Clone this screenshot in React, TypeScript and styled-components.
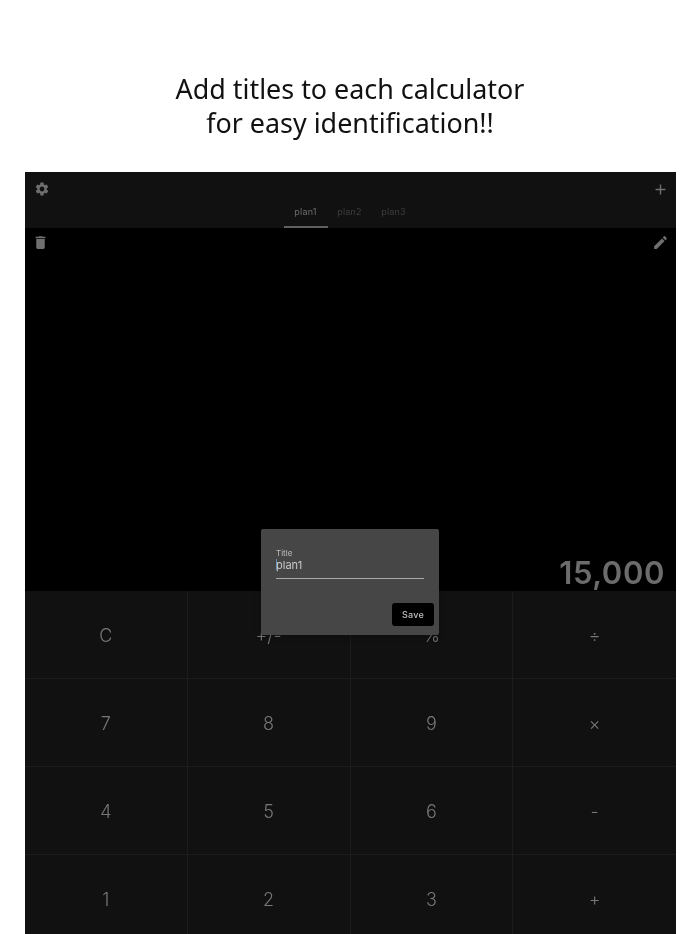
import styled, { createGlobalStyle } from "styled-components";
import { MdAdd, MdDelete, MdEdit, MdSettings } from "react-icons/md";

const plans = ["plan1", "plan2", "plan3"];
const keyRows = [
  ["C", "+/-", "%", "÷"],
  ["7", "8", "9", "×"],
  ["4", "5", "6", "-"],
  ["1", "2", "3", "+"],
];

const GlobalStyle = createGlobalStyle`
  html, body {
    margin: 0;
    height: 934px;
    overflow: hidden;
    background: #fff;
  }
`;

function App() {
  return (
    <Page>
      <GlobalStyle />
      <Caption>
        Add titles to each calculator
        <br />
        for easy identification!!
      </Caption>
      <Device>
        <Header>
          <TopBar>
            <IconButton>
              <MdSettings size={16} />
            </IconButton>
            <IconButton>
              <MdAdd size={17} />
            </IconButton>
          </TopBar>
          <Tabs>
            {plans.map((plan, i) => (
              <Tab key={plan} $active={i === 0}>
                {plan}
              </Tab>
            ))}
          </Tabs>
        </Header>
        <Display>
          <DisplayTools>
            <IconButton>
              <MdDelete size={17} />
            </IconButton>
            <IconButton>
              <MdEdit size={17} />
            </IconButton>
          </DisplayTools>
          <Amount>15,000</Amount>
        </Display>
        <Keypad>
          {keyRows.flat().map((key) => (
            <Key key={key}>{key}</Key>
          ))}
        </Keypad>
        <Dialog>
          <FieldLabel>Title</FieldLabel>
          <FieldValue>
            <Caret />
            plan1
          </FieldValue>
          <DialogActions>
            <SaveButton>Save</SaveButton>
          </DialogActions>
        </Dialog>
      </Device>
    </Page>
  );
}

const Page = styled.div`
  height: 934px;
  overflow: hidden;
  display: flex;
  flex-direction: column;
  font-family: Inter, "Liberation Sans", sans-serif;
  will-change: transform;
`;
const Caption = styled.div`
  flex: none;
  height: 172px;
  box-sizing: border-box;
  padding-top: 72px;
  text-align: center;
  font-family: "Noto Sans", "Open Sans", sans-serif;
  font-size: 26.9px;
  line-height: 34px;
  color: #111;
`;
const Device = styled.div`
  position: relative;
  flex: none;
  width: 651px;
  margin-left: 25px;
  display: flex;
  flex-direction: column;
  background: #000;
`;
const Header = styled.div`
  height: 56px;
  background: #111;
  display: flex;
  flex-direction: column;
`;
const TopBar = styled.div`
  height: 31px;
  padding: 3px 7px 0 9px;
  box-sizing: border-box;
  display: flex;
  align-items: center;
  justify-content: space-between;
`;
const IconButton = styled.div`
  display: flex;
  color: #6f6f6f;
`;
const Tabs = styled.div`
  flex: 1;
  display: flex;
  justify-content: center;
  padding-right: 2px;
`;
const Tab = styled.div<{ $active: boolean }>`
  width: 44px;
  display: flex;
  align-items: center;
  justify-content: center;
  padding-bottom: 6px;
  box-sizing: border-box;
  font-size: 9px;
  letter-spacing: 0.2px;
  color: ${(p) => (p.$active ? "#6e6e6e" : "#3e3e3e")};
  border-bottom: 2px solid ${(p) => (p.$active ? "#606060" : "transparent")};
`;
const Display = styled.div`
  height: 363px;
  box-sizing: border-box;
  display: flex;
  flex-direction: column;
  justify-content: space-between;
  background: #000;
`;
const DisplayTools = styled.div`
  display: flex;
  justify-content: space-between;
  padding: 6px 7px 0 7px;
`;
const Amount = styled.div`
  text-align: right;
  padding-right: 11px;
  font-size: 31px;
  font-weight: 600;
  line-height: 37px;
  letter-spacing: 0.6px;
  color: #6c6c6c;
`;
const Keypad = styled.div`
  display: grid;
  grid-template-columns: repeat(4, 1fr);
  grid-auto-rows: 88px;
  background: #111;
`;
const Key = styled.div`
  display: flex;
  align-items: center;
  justify-content: center;
  padding-top: 2px;
  font-size: 18px;
  font-weight: 300;
  color: #777;
  box-sizing: border-box;
  border-right: 1px solid #1c1c1c;
  border-bottom: 1px solid #1c1c1c;
  &:nth-child(4n) {
    border-right: none;
  }
`;
const Dialog = styled.div`
  position: absolute;
  left: 236px;
  top: 357px;
  width: 178px;
  height: 106px;
  box-sizing: border-box;
  padding: 19px 5px 9px 15px;
  display: flex;
  flex-direction: column;
  background: #464646;
  border-radius: 2px;
  box-shadow: 0 2px 6px rgba(0, 0, 0, 0.25);
`;
const FieldLabel = styled.div`
  font-size: 8px;
  line-height: 10px;
  color: #bdbdbd;
`;
const FieldValue = styled.div`
  margin-right: 10px;
  height: 21px;
  padding-bottom: 7px;
  box-sizing: border-box;
  display: flex;
  align-items: center;
  font-size: 11px;
  color: #c9c9c9;
  border-bottom: 1px solid #a8a8a8;
`;
const Caret = styled.span`
  width: 1px;
  height: 11px;
  margin-right: -1px;
  background: #5f87b5;
`;
const DialogActions = styled.div`
  flex: 1;
  display: flex;
  align-items: flex-end;
  justify-content: flex-end;
`;
const SaveButton = styled.div`
  width: 42px;
  height: 23px;
  display: flex;
  align-items: center;
  justify-content: center;
  background: #000;
  border-radius: 3px;
  font-size: 9px;
  font-weight: 500;
  letter-spacing: 0.2px;
  color: #c0c0c0;
`;

export default App;
